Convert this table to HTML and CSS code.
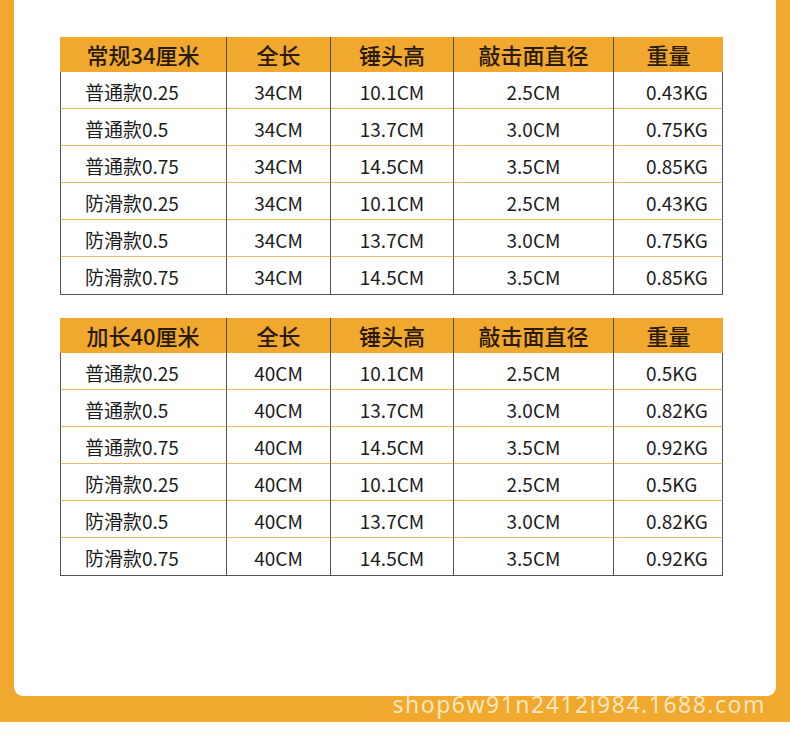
FILE: index.html
```html
<!DOCTYPE html>
<html lang="zh">
<head>
<meta charset="utf-8">
<link rel="stylesheet" href="styles.css">
</head>
<body>
<div class="frame">
  <div class="card">
    <table class="spec">
      <colgroup><col class="c1"><col class="c2"><col class="c3"><col class="c4"><col class="c5"></colgroup>
      <thead>
        <tr><th>常规34厘米</th><th>全长</th><th>锤头高</th><th>敲击面直径</th><th>重量</th></tr>
      </thead>
      <tbody>
        <tr><td>普通款0.25</td><td>34CM</td><td>10.1CM</td><td>2.5CM</td><td>0.43KG</td></tr>
        <tr><td>普通款0.5</td><td>34CM</td><td>13.7CM</td><td>3.0CM</td><td>0.75KG</td></tr>
        <tr><td>普通款0.75</td><td>34CM</td><td>14.5CM</td><td>3.5CM</td><td>0.85KG</td></tr>
        <tr><td>防滑款0.25</td><td>34CM</td><td>10.1CM</td><td>2.5CM</td><td>0.43KG</td></tr>
        <tr><td>防滑款0.5</td><td>34CM</td><td>13.7CM</td><td>3.0CM</td><td>0.75KG</td></tr>
        <tr><td>防滑款0.75</td><td>34CM</td><td>14.5CM</td><td>3.5CM</td><td>0.85KG</td></tr>
      </tbody>
    </table>
    <table class="spec">
      <colgroup><col class="c1"><col class="c2"><col class="c3"><col class="c4"><col class="c5"></colgroup>
      <thead>
        <tr><th>加长40厘米</th><th>全长</th><th>锤头高</th><th>敲击面直径</th><th>重量</th></tr>
      </thead>
      <tbody>
        <tr><td>普通款0.25</td><td>40CM</td><td>10.1CM</td><td>2.5CM</td><td>0.5KG</td></tr>
        <tr><td>普通款0.5</td><td>40CM</td><td>13.7CM</td><td>3.0CM</td><td>0.82KG</td></tr>
        <tr><td>普通款0.75</td><td>40CM</td><td>14.5CM</td><td>3.5CM</td><td>0.92KG</td></tr>
        <tr><td>防滑款0.25</td><td>40CM</td><td>10.1CM</td><td>2.5CM</td><td>0.5KG</td></tr>
        <tr><td>防滑款0.5</td><td>40CM</td><td>13.7CM</td><td>3.0CM</td><td>0.82KG</td></tr>
        <tr><td>防滑款0.75</td><td>40CM</td><td>14.5CM</td><td>3.5CM</td><td>0.92KG</td></tr>
      </tbody>
    </table>
  </div>
  <div class="footer">shop6w91n2412i984.1688.com</div>
</div>
</body>
</html>
```
FILE: styles.css
```css
* { box-sizing: border-box; }
html, body { margin: 0; padding: 0; }
body {
  background: #fdfdf9;
  width: 790px;
  height: 735px;
  overflow: hidden;
  font-family: "Noto Sans CJK SC", "Noto Sans", sans-serif;
}
.frame {
  background: #f0a82f;
  height: 722px;
  padding: 0 14px;
  display: flex;
  flex-direction: column;
}
.card {
  background: #ffffff;
  height: 696px;
  flex: none;
  border-radius: 0 0 9px 9px;
  padding: 37px 0 0 46px;
  display: flex;
  flex-direction: column;
  gap: 23px;
}
.footer {
  text-align: right;
  padding-right: 10px;
  font-family: "Noto Sans", "DejaVu Sans", sans-serif;
  font-size: 23px;
  font-weight: 400;
  letter-spacing: 1.5px;
  line-height: 16px;
  color: #fde6bd;
  white-space: nowrap;
}
.spec {
  border-collapse: separate;
  border-spacing: 0;
  table-layout: fixed;
  width: 663px;
}
.c1 { width: 166px; }
.c2 { width: 104px; }
.c3 { width: 123px; }
.c4 { width: 160px; }
.c5 { width: 110px; }
.spec th {
  background: #f0a82f;
  height: 35px;
  padding: 0 0 2px;
  font-size: 22px;
  font-weight: 500;
  color: #2a1a08;
  text-align: center;
  border-left: 1px solid #5a5048;
  line-height: 1;
}
.spec th:first-child { border-left: none; }
.spec td {
  height: 37px;
  padding: 2px 0 0;
  font-size: 19px;
  color: #1c1c1c;
  text-align: center;
  border-left: 1px solid #555;
  border-bottom: 1px solid #ecb866;
  line-height: 1;
}
.spec td:last-child { border-right: 1px solid #555; }
.spec tbody tr:last-child td { border-bottom: 1px solid #555; height: 38px; }
.spec td:first-child { text-align: left; padding-left: 24px; }
.spec td:last-child { text-align: left; padding-left: 32px; }
```
